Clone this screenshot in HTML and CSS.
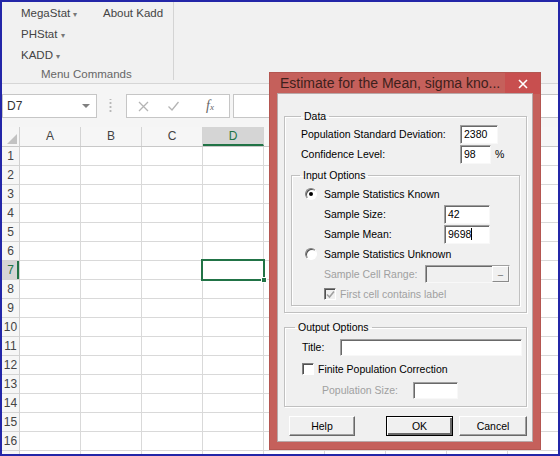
FILE: index.html
```html
<!DOCTYPE html>
<html lang="en">

<head>
    <meta charset="utf-8">
    <title>Estimate for the Mean, sigma known</title>
    <link rel="stylesheet" href="styles.css">
</head>

<body>
    <div class="window">

        <!-- Ruban -->
        <div class="ribbon">
            <div class="ribbon-group">
                <div class="ribbon-items">
                    <span>MegaStat <span class="caret">&#9662;</span></span>
                    <span>About Kadd</span>
                    <span>PHStat <span class="caret">&#9662;</span></span>
                    <span></span>
                    <span>KADD <span class="caret">&#9662;</span></span>
                </div>
                <div class="group-label">Menu Commands</div>
            </div>
        </div>

        <!-- Barre de formule -->
        <div class="formula-bar">
            <div class="name-box">
                <span>D7</span>
                <span class="name-arrow"></span>
            </div>
            <div class="grip"></div>
            <div class="fx-buttons">
                <svg class="icon-cancel" width="11" height="11" viewBox="0 0 11 11">
                    <path d="M1 1 L10 10 M10 1 L1 10" stroke="#b4b4b4" stroke-width="1.3" fill="none" />
                </svg>
                <svg class="icon-enter" width="11" height="10" viewBox="0 0 11 10">
                    <path d="M0.5 5.5 L4 9 L10.5 1" stroke="#b4b4b4" stroke-width="1.3" fill="none" />
                </svg>
                <span class="fx">f<small>x</small></span>
            </div>
            <div class="formula-input"></div>
        </div>

        <!-- Feuille de calcul -->
        <div class="sheet">
            <div class="corner"></div>
            <div class="col-heads">
                <div class="col-head">A</div>
                <div class="col-head">B</div>
                <div class="col-head">C</div>
                <div class="col-head active">D</div>
                <div class="col-head"></div>
                <div class="col-head"></div>
                <div class="col-head"></div>
                <div class="col-head"></div>
                <div class="col-head"></div>
            </div>
            <div class="row-heads">
                <div class="row-head">1</div>
                <div class="row-head">2</div>
                <div class="row-head">3</div>
                <div class="row-head">4</div>
                <div class="row-head">5</div>
                <div class="row-head">6</div>
                <div class="row-head active">7</div>
                <div class="row-head">8</div>
                <div class="row-head">9</div>
                <div class="row-head">10</div>
                <div class="row-head">11</div>
                <div class="row-head">12</div>
                <div class="row-head">13</div>
                <div class="row-head">14</div>
                <div class="row-head">15</div>
                <div class="row-head">16</div>
                <div class="row-head"></div>
            </div>
            <div class="cells">
                <div class="selection"><span class="handle"></span></div>
            </div>
        </div>

        <!-- Boîte de dialogue -->
        <div class="dialog">
            <div class="dialog-title">
                <h1>Estimate for the Mean, sigma kno...</h1>
                <span class="close">
                    <svg width="10" height="10" viewBox="0 0 10 10">
                        <path d="M1 1 L9 9 M9 1 L1 9" stroke="#fff" stroke-width="1.6" fill="none" />
                    </svg>
                </span>
            </div>

            <div class="client">
                <fieldset class="group group-data">
                    <legend>Data</legend>
                    <div class="row">
                        <span class="label label-wide">Population Standard Deviation:</span>
                        <span class="field field-std">2380</span>
                    </div>
                    <div class="row">
                        <span class="label label-wide">Confidence Level:</span>
                        <span class="field field-conf">98</span>
                        <span class="unit">%</span>
                    </div>

                    <fieldset class="group group-input">
                        <legend>Input Options</legend>
                        <div class="row">
                            <span class="radio checked"></span>
                            <span>Sample Statistics Known</span>
                        </div>
                        <div class="row indent">
                            <span class="label label-sample">Sample Size:</span>
                            <span class="field field-sample">42</span>
                        </div>
                        <div class="row indent">
                            <span class="label label-sample">Sample Mean:</span>
                            <span class="field field-sample">9698<span class="cursor"></span></span>
                        </div>
                        <div class="row">
                            <span class="radio"></span>
                            <span>Sample Statistics Unknown</span>
                        </div>
                        <div class="row indent disabled">
                            <span class="label label-range">Sample Cell Range:</span>
                            <span class="field field-range"><span class="pick">_</span></span>
                        </div>
                        <div class="row indent disabled">
                            <span class="check checked">
                                <svg width="9" height="9" viewBox="0 0 9 9">
                                    <path d="M1 4.5 L3.5 7 L8 1.5" stroke="#a0a0a0" stroke-width="1.6" fill="none" />
                                </svg>
                            </span>
                            <span>First cell contains label</span>
                        </div>
                    </fieldset>
                </fieldset>

                <fieldset class="group group-output">
                    <legend>Output Options</legend>
                    <div class="row row-title">
                        <span class="label label-title">Title:</span>
                        <span class="field field-title"></span>
                    </div>
                    <div class="row row-finite">
                        <span class="check"></span>
                        <span>Finite Population Correction</span>
                    </div>
                    <div class="row indent disabled">
                        <span class="label label-pop">Population Size:</span>
                        <span class="field field-pop"></span>
                    </div>
                </fieldset>

                <div class="buttons">
                    <span class="button button-help">Help</span>
                    <span class="button button-ok">OK</span>
                    <span class="button button-cancel">Cancel</span>
                </div>
            </div>
        </div>

    </div>
</body>

</html>
```

FILE: styles.css
```css
/* Normalisation
============================================================*/

* {
    margin: 0;
    padding: 0;
    box-sizing: border-box;
}

body {
    width: 560px;
    height: 456px;
    overflow: hidden;
    font-family: "Liberation Sans", Arial, sans-serif;
    color: #444;
}

.window {
    position: relative;
    width: 560px;
    height: 456px;
    border: 2px solid #2326a8;
    background-color: #fff;
    overflow: hidden;

    display: flex;
    flex-direction: column;
}

/* Ruban
============================================================*/

.ribbon {
    height: 82px;
    flex-shrink: 0;
    background-color: #f1f1f1;
    border-bottom: 1px solid #d6d6d6;
    display: flex;
}

.ribbon-group {
    width: 172px;
    height: 78px;
    border-right: 1px solid #d4d4d4;
    display: flex;
    flex-direction: column;
}

.ribbon-items {
    padding-left: 19px;
    display: grid;
    grid-template-columns: 82px auto;
    grid-auto-rows: 21px;
    align-items: center;
    font-size: 11.5px;
    color: #444;
}

.caret {
    font-size: 8px;
    color: #777;
}

.group-label {
    margin-top: auto;
    padding-left: 39px;
    font-size: 11.5px;
    color: #666;
    line-height: 12px;
}

/* Barre de formule
============================================================*/

.formula-bar {
    height: 43px;
    flex-shrink: 0;
    background-color: #f5f5f5;
    padding-top: 10px;
    display: flex;
    align-items: flex-start;
}

.name-box {
    width: 95px;
    height: 24px;
    background-color: #fff;
    border: 1px solid #c6c6c6;
    padding: 0 6px 0 4px;
    font-size: 12px;
    color: #333;

    display: flex;
    align-items: center;
    justify-content: space-between;
}

.name-arrow {
    width: 0;
    height: 0;
    border-left: 4px solid transparent;
    border-right: 4px solid transparent;
    border-top: 4px solid #808080;
}

.grip {
    width: 29px;
    height: 24px;
    background-image: radial-gradient(circle, #b8b8b8 1px, transparent 1.2px);
    background-size: 3px 4px;
    background-repeat: repeat-y;
    background-position: 12px 7px;
    background-clip: content-box;
    padding: 5px 0;
}

.fx-buttons {
    width: 104px;
    height: 24px;
    background-color: #fff;
    border: 1px solid #c6c6c6;
    padding-left: 11px;

    display: flex;
    align-items: center;
}

.icon-enter {
    margin-left: 19px;
}

.fx {
    margin-left: 27px;
    font-family: "Liberation Serif", serif;
    font-style: italic;
    font-size: 14px;
    color: #666;
}

.fx small {
    font-size: 9px;
}

.formula-input {
    flex-grow: 1;
    height: 24px;
    margin-left: 3px;
    background-color: #fff;
    border: 1px solid #c6c6c6;
    border-right: none;
}

/* Feuille de calcul
============================================================*/

.sheet {
    flex-grow: 1;
    display: grid;
    grid-template-columns: 18px 1fr;
    grid-template-rows: 20px 1fr;
    overflow: hidden;
}

.corner {
    background-color: #f6f6f6;
    border-right: 1px solid #d0d0d0;
    border-bottom: 1px solid #c8c8c8;
    position: relative;
}

/* Petit triangle du coin */
.corner::after {
    content: "";
    position: absolute;
    right: 2px;
    bottom: 2px;
    width: 0;
    height: 0;
    border-left: 10px solid transparent;
    border-bottom: 10px solid #c2c2c2;
}

.col-heads {
    display: flex;
    background-color: #f6f6f6;
    border-bottom: 1px solid #c8c8c8;
}

.col-head {
    width: 61px;
    flex-shrink: 0;
    border-right: 1px solid #d4d4d4;
    font-size: 12px;
    color: #444;
    text-align: center;
    line-height: 19px;
}

.col-head.active {
    background-color: #d5d5d5;
    border-bottom: 2px solid #217346;
    line-height: 18px;
    color: #217346;
}

.row-heads {
    background-color: #f6f6f6;
    border-right: 1px solid #d0d0d0;
}

.row-head {
    height: 19px;
    border-bottom: 1px solid #d4d4d4;
    font-size: 12px;
    color: #444;
    text-align: center;
    line-height: 18px;
}

.row-head.active {
    background-color: #d5d5d5;
    box-shadow: inset -2px 0 0 #217346;
    color: #217346;
}

.cells {
    position: relative;
    background-image:
        linear-gradient(to right, #d9d9d9 1px, transparent 1px),
        linear-gradient(to bottom, #d9d9d9 1px, transparent 1px);
    background-size: 61px 100%, 100% 19px;
    background-position: 60px 0, 0 18px;
}

.selection {
    position: absolute;
    left: 181px;
    top: 112px;
    width: 64px;
    height: 22px;
    border: 2px solid #217346;
}

.handle {
    position: absolute;
    right: -4px;
    bottom: -4px;
    width: 6px;
    height: 6px;
    background-color: #217346;
    border: 1px solid #fff;
}

/* Boîte de dialogue
============================================================*/

.dialog {
    position: absolute;
    left: 267px;
    top: 70px;
    width: 272px;
    height: 378px;
    background-color: #c5605b;
    border: 1px solid #b45651;
    padding: 0 7px 7px;

    display: flex;
    flex-direction: column;
}

.dialog-title {
    height: 20px;
    flex-shrink: 0;
    display: flex;
    align-items: center;
    justify-content: space-between;
}

.dialog-title h1 {
    font-size: 14px;
    font-weight: normal;
    color: #3e1f1c;
    padding-left: 3px;
}

.close {
    width: 35px;
    height: 21px;
    margin-right: -7px;
    margin-top: 1px;
    background-color: #c84f4f;

    display: flex;
    align-items: center;
    justify-content: center;
}

.client {
    flex-grow: 1;
    background-color: #f0f0f0;
    border: 1px solid #b8a8a8;
    padding-top: 15px;
    font-size: 10.5px;
    color: #000;

    display: flex;
    flex-direction: column;
}

/* Cadres de groupe en relief */
.group {
    border: 1px solid #c0c0c0;
    box-shadow: inset 1px 1px 0 #fff, 1px 1px 0 #fff;
}

.group legend {
    margin-left: 10px;
    padding: 0 3px;
    line-height: 14px;
}

.group-data {
    margin: 0 5px 0 6px;
    padding: 1px 6px 6px 6px;
}

.group-input {
    margin-top: 4px;
    padding: 2px 0 1px 0;
}

.group-input legend {
    margin-left: 8px;
}

.group-output {
    margin: 7px 6px 0 6px;
    padding: 2px 4px 6px 0;
}

.row {
    height: 20px;
    display: flex;
    align-items: center;
}

.group-data > .row {
    padding-left: 10px;
}

.group-input .row {
    padding-left: 13px;
}

.group-input .row.indent {
    padding-left: 32px;
}

.group-output .row {
    padding-left: 17px;
}

.group-output .row.indent {
    padding-left: 37px;
}

.row-title,
.row-finite {
    height: 22px;
}

.disabled {
    color: #a0a0a0;
}

.label-wide {
    width: 159px;
}

.label-sample {
    width: 120px;
}

.label-range {
    width: 101px;
}

.label-title {
    width: 38px;
}

.label-pop {
    width: 91px;
}

.unit {
    margin-left: 4px;
}

/* Champs de saisie en creux */
.field {
    position: relative;
    height: 19px;
    background-color: #fff;
    border: 1px solid;
    border-color: #a0a0a0 #f8f8f8 #f8f8f8 #a0a0a0;
    box-shadow: inset 1px 1px 0 #696969;
    padding: 0 3px;
    line-height: 17px;
    color: #000;

    display: flex;
    align-items: center;
}

.field-std {
    width: 38px;
}

.field-conf {
    width: 31px;
}

.field-sample {
    width: 46px;
}

.field-range {
    width: 85px;
    height: 18px;
    background-color: #f0f0f0;
    justify-content: flex-end;
    padding: 0;
}

.field-title {
    width: 182px;
    height: 17px;
}

.field-pop {
    width: 45px;
    height: 17px;
}

.cursor {
    display: inline-block;
    width: 1px;
    height: 12px;
    background-color: #000;
}

.pick {
    width: 17px;
    height: 16px;
    border: 1px solid;
    border-color: #fff #8a8a8a #8a8a8a #fff;
    background-color: #f0f0f0;
    font-size: 9px;
    line-height: 9px;
    text-align: center;
    color: #555;
}

/* Boutons radio et cases à cocher */
.radio {
    width: 12px;
    height: 12px;
    margin-right: 7px;
    border-radius: 50%;
    border: 1px solid;
    border-color: #808080 #fff #fff #808080;
    background-color: #fff;
    box-shadow: inset 1px 1px 0 #505050;
    position: relative;
}

.radio.checked::after {
    content: "";
    position: absolute;
    left: 3px;
    top: 3px;
    width: 4px;
    height: 4px;
    border-radius: 50%;
    background-color: #000;
}

.check {
    width: 12px;
    height: 12px;
    margin-right: 4px;
    border: 1px solid;
    border-color: #808080 #fff #fff #808080;
    background-color: #fff;
    box-shadow: inset 1px 1px 0 #505050;

    display: flex;
    align-items: center;
    justify-content: center;
}

.disabled .check {
    background-color: #f0f0f0;
}

/* Boutons du bas */
.buttons {
    margin-top: 9px;
    padding: 0 5px 0 11px;
    display: flex;
}

.button {
    height: 20px;
    border: 1px solid;
    border-color: #fff #696969 #696969 #fff;
    box-shadow: inset -1px -1px 0 #a0a0a0;
    background-color: #f0f0f0;
    line-height: 18px;
    text-align: center;
    color: #000;
}

.button-help {
    width: 66px;
}

.button-ok {
    width: 67px;
    margin-left: auto;
    border-color: #000;
    box-shadow: inset 1px 1px 0 #fff, inset -2px -2px 0 #696969;
}

.button-cancel {
    width: 68px;
    margin-left: 6px;
}
```
